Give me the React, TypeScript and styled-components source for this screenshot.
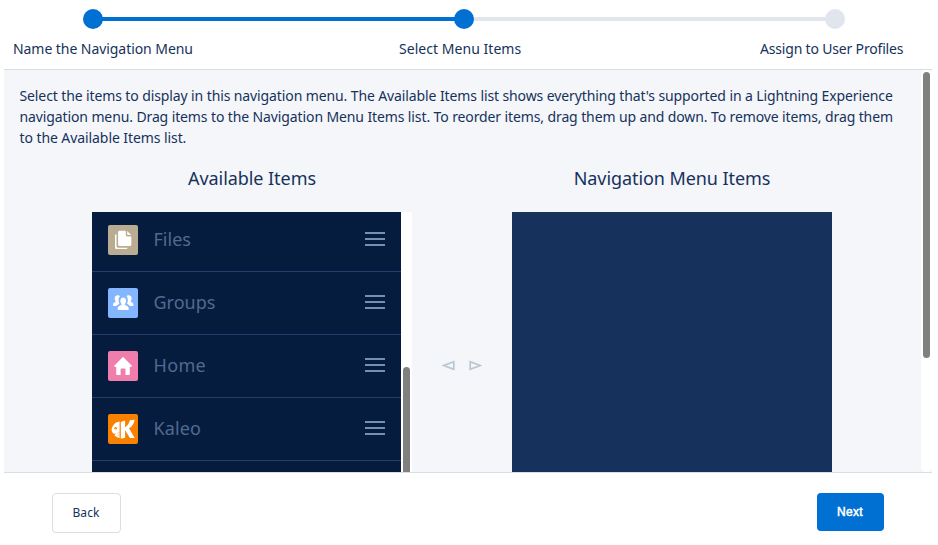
import React from "react";
import styled, { createGlobalStyle } from "styled-components";

const colors = {
  brand: "#0070d2",
  track: "#e0e5ee",
  text: "#16325c",
  border: "#d8dde6",
  panel: "#f4f6f9",
  list: "#061c3f",
  drop: "#16325c",
};

const GlobalStyle = createGlobalStyle`
  *, *::before, *::after { box-sizing: border-box; }
  html, body { margin: 0; background: #fff; overflow: hidden; }
  body { font-family: "Noto Sans", "Open Sans", sans-serif; font-size: 14px; color: ${colors.text}; }
`;

const Page = styled.div`
  display: flex;
  flex-direction: column;
  width: 938px;
  height: 545px;
  padding: 0 6px 0 4px;
`;

const Header = styled.header`
  flex: none;
  height: 70px;
  padding-top: 9px;
  border-bottom: 1px solid ${colors.border};
`;

const Progress = styled.div`
  display: flex;
  align-items: center;
  width: 762px;
  margin-left: 79px;
`;

const Dot = styled.span<{ $done?: boolean }>`
  flex: none;
  z-index: 1;
  width: 20px;
  height: 20px;
  border-radius: 50%;
  background: ${(p) => (p.$done ? colors.brand : colors.track)};
`;

const Bar = styled.span<{ $done?: boolean }>`
  flex: 1;
  height: 4px;
  margin: 0 -1px;
  background: ${(p) => (p.$done ? colors.brand : colors.track)};
`;

const StepLabels = styled.div`
  display: grid;
  grid-template-columns: 386px 361px 1fr;
  margin: 10px 0 0 9px;
  line-height: 20px;
`;

const Text = styled.span<{ $tracking?: number }>`
  white-space: nowrap;
  letter-spacing: ${(p) => p.$tracking ?? 0}px;
`;

const Panel = styled.main`
  flex: none;
  display: flex;
  height: 403px;
  border-bottom: 1px solid ${colors.border};
  overflow: hidden;
`;

const PanelContent = styled.div`
  width: 917px;
  padding: 15px 15px 0;
  background: ${colors.panel};
`;

const Scrollbar = styled.div`
  width: 11px;
  padding: 2px 2px 0;
  background: #fff;
`;

const PanelScrollbar = styled(Scrollbar)`
  box-shadow: 0 0 0 4px ${colors.panel};
  border-radius: 5px;
  clip-path: inset(0);
`;

const Thumb = styled.div<{ $height: number; $offset?: number }>`
  height: ${(p) => p.$height}px;
  margin-top: ${(p) => p.$offset ?? 0}px;
  border-radius: 4px;
  background: #808080;
`;

const Intro = styled.p`
  display: flex;
  flex-direction: column;
  margin: 0 0 0 0.5px;
  line-height: 21px;
`;

const Columns = styled.div`
  display: flex;
  margin: 18px 0 0 73px;
`;

const Column = styled.section`
  display: flex;
  flex-direction: column;
  width: 320px;
`;

const Heading = styled.h2`
  margin: 0 0 22px;
  font-size: 18px;
  font-weight: 400;
  line-height: 24px;
  text-align: center;
`;

const ListBox = styled.div`
  display: flex;
  height: 260px;
  overflow: hidden;
  background: ${colors.list};
`;

const Items = styled.ul`
  flex: 1;
  margin: -3px 0 0;
  padding: 0;
  list-style: none;
`;

const Item = styled.li`
  display: flex;
  align-items: center;
  height: 63px;
  padding: 0 16px;
  border-bottom: 1px solid #233f6b;
`;

const Tile = styled.span<{ $color: string }>`
  display: flex;
  flex: none;
  width: 30px;
  height: 30px;
  border-radius: 2px;
  background: ${(p) => p.$color};
`;

const ItemName = styled(Text)`
  flex: 1;
  margin-left: 15.5px;
  padding-bottom: 3px;
  font-size: 18px;
  line-height: 24px;
  color: #526a8e;
`;

const Grip = styled.span`
  width: 20px;
  height: 14px;
  margin-top: -3px;
  border: solid #7590b0;
  border-width: 2px 0;
  background: linear-gradient(#7590b0, #7590b0) center / 100% 2px no-repeat;
`;

const Transfer = styled.div`
  display: flex;
  justify-content: center;
  gap: 14px;
  width: 99px;
  margin-right: 1px;
  padding-top: 194px;
`;

const DropZone = styled.div`
  height: 260px;
  background: ${colors.drop};
`;

const Footer = styled.footer`
  display: flex;
  align-items: flex-start;
  justify-content: space-between;
  padding: 20px 48px 0;
`;

const Button = styled.button<{ $primary?: boolean }>`
  width: ${(p) => (p.$primary ? 67 : 69)}px;
  height: ${(p) => (p.$primary ? 38 : 40)}px;
  padding: 0 1px 0 0;
  border: ${(p) => (p.$primary ? "0" : `1px solid ${colors.border}`)};
  border-radius: 4px;
  background: ${(p) => (p.$primary ? colors.brand : "#fff")};
  color: ${(p) => (p.$primary ? "#fff" : colors.text)};
  font: 12px/18px ${(p) => (p.$primary ? '"Liberation Sans"' : '"Noto Sans"')}, sans-serif;
  letter-spacing: ${(p) => (p.$primary ? 0.35 : 0.1)}px;
  -webkit-text-stroke: ${(p) => (p.$primary ? "0.5px #fff" : "0")};
`;

const FilesIcon = () => (
  <svg width="30" height="30" viewBox="0 0 30 30" fill="#fff">
    <path d="M11.6 5.7h6.2v4.100c0 1 .6 1.600 1.600 1.600h3.900v8.200c0 .9-.6 1.500-1.500 1.500H11.600c-.9 0-1.500-.6-1.500-1.500V7.200c0-.9.6-1.500 1.500-1.500z" />
    <path d="M19.200 5.900l4 4h-3.300c-.4 0-.7-.3-.7-.7z" />
    <path d="M8.500 9.200v11.800c0 1 .7 1.700 1.700 1.700h9.300c0 .8-.7 1.400-1.600 1.400H8.700c-1 0-1.700-.7-1.700-1.700V10.600c0-.8.500-1.400 1.500-1.400z" />
  </svg>
);

const GroupsIcon = () => (
  <svg width="30" height="30" viewBox="0 0 30 30" fill="#fff">
    <path d="M15.200 9.400c1.800 0 2.900 1.400 2.900 3.400 0 1.200-.4 2.200-1 3-.4.600-.3 1.200.4 1.500 2 .8 3.200 1.600 3.200 3.100v.5c0 .8-.5 1.200-1.300 1.200h-8.400c-.8 0-1.300-.4-1.300-1.200v-.5c0-1.500 1.200-2.300 3.200-3.100.7-.3.8-.9.400-1.500-.6-.8-1-1.800-1-3 0-2 1.100-3.400 2.900-3.400z" />
    <path d="M9.800 7.200c1 0 1.800.3 2.300 1-1.200 1-1.600 2.500-1.500 4.400 0 1.200.3 2.200.8 3.100-1.300.6-2.200 1.300-2.900 2.300H6.200c-.8 0-1.200-.4-1.200-1v-.5c0-1.100.9-1.800 2.200-2.400.5-.3.600-.8.200-1.300-.5-.7-.7-1.500-.7-2.500 0-1.800 1.200-3.100 3.100-3.100z" />
    <path d="M20.600 7.200c-1 0-1.800.3-2.300 1 1.200 1 1.600 2.500 1.500 4.400 0 1.200-.3 2.200-.8 3.100 1.300.6 2.200 1.300 2.900 2.300h2.300c.8 0 1.200-.4 1.200-1v-.5c0-1.100-.9-1.800-2.200-2.400-.5-.3-.6-.8-.2-1.300.5-.7.7-1.500.7-2.500 0-1.800-1.200-3.100-3.100-3.100z" />
  </svg>
);

const HomeIcon = () => (
  <svg width="30" height="30" viewBox="0 0 30 30" fill="#fff">
    <path d="M14.400 6.400c.4-.4.900-.4 1.300 0l8.100 8.400c.4.400.2.900-.3.900H21.800v7.200c0 .7-.4 1.100-1.100 1.100h-3.200v-5.600c0-.6-.4-1-1-1h-2.900c-.6 0-1 .4-1 1V24H9.300c-.7 0-1.100-.4-1.100-1.100v-7.200H6.600c-.5 0-.7-.5-.3-.9z" />
  </svg>
);

const KaleoIcon = () => (
  <svg width="30" height="30" viewBox="0 0 30 30">
    <path
      d="M11.600 7.500v16.600c-2.200-.5-4-1.600-5.300-3.100l1.700-1.200-2.900-.3c-.7-1-1.100-1.900-1.500-3.200C3.700 12.400 6.600 8.200 11.600 7.500z"
      fill="#fff"
    />
    <circle cx="7.700" cy="14.200" r="1.300" fill="#f88200" />
    <circle cx="7.700" cy="14.200" r="0.400" fill="#fff" />
    <path d="M11.600 18.200l-2.300 1.300M11.600 20.800l-2.300 1.300" stroke="#f88200" strokeWidth="0.500" />
    <path d="M12.800 8.100l4.300-1.700v6.800c2.300-1.200 3.800-3.600 4.900-6.900l4.700-.5c-.8 4.300-2.800 7-5.700 8.500 1.600 2.600 3.500 5.900 5.700 9.700h-4.800l-4.800-8v7.700c-1.500.6-2.900.8-4.300.7z" fill="#fff" />
  </svg>
);

const Triangle = ({ right }: { right?: boolean }) => (
  <svg width="13" height="11" viewBox="0 0 13 11" fill="none" stroke="#b9c7d2" strokeWidth="1.700">
    <path d={right ? "M1.200 1.700v7.600l10-3.800z" : "M11.800 1.700v7.600l-10-3.800z"} />
  </svg>
);

const steps = [
  { label: "Name the Navigation Menu", tracking: -0.06 },
  { label: "Select Menu Items", tracking: 0.04 },
  { label: "Assign to User Profiles", tracking: -0.18 },
];

const introLines = [
  {
    text: "Select the items to display in this navigation menu. The Available Items list shows everything that's supported in a Lightning Experience",
    tracking: -0.11,
  },
  {
    text: "navigation menu. Drag items to the Navigation Menu Items list. To reorder items, drag them up and down. To remove items, drag them",
    tracking: -0.113,
  },
  { text: "to the Available Items list.", tracking: -0.08 },
];

const items = [
  { name: "Files", color: "#baac93", tracking: 0, Icon: FilesIcon },
  { name: "Groups", color: "#83b6ff", tracking: 0, Icon: GroupsIcon },
  { name: "Home", color: "#ef7ead", tracking: 0.35, Icon: HomeIcon },
  { name: "Kaleo", color: "#f88200", tracking: 0.1, Icon: KaleoIcon },
];

export default function App() {
  return (
    <>
      <GlobalStyle />
      <Page>
        <Header>
          <Progress>
            <Dot $done />
            <Bar $done />
            <Dot $done />
            <Bar />
            <Dot />
          </Progress>
          <StepLabels>
            {steps.map((s) => (
              <Text key={s.label} $tracking={s.tracking}>
                {s.label}
              </Text>
            ))}
          </StepLabels>
        </Header>
        <Panel>
          <PanelContent>
            <Intro>
              {introLines.map((l) => (
                <Text key={l.text} $tracking={l.tracking}>
                  {l.text}
                </Text>
              ))}
            </Intro>
            <Columns>
              <Column>
                <Heading>
                  <Text $tracking={-0.06}>Available Items</Text>
                </Heading>
                <ListBox>
                  <Items>
                    {items.map(({ name, color, tracking, Icon }) => (
                      <Item key={name}>
                        <Tile $color={color}>
                          <Icon />
                        </Tile>
                        <ItemName $tracking={tracking}>{name}</ItemName>
                        <Grip />
                      </Item>
                    ))}
                  </Items>
                  <Scrollbar>
                    <Thumb $offset={153} $height={120} />
                  </Scrollbar>
                </ListBox>
              </Column>
              <Transfer>
                <Triangle />
                <Triangle right />
              </Transfer>
              <Column>
                <Heading>
                  <Text $tracking={-0.08}>Navigation Menu Items</Text>
                </Heading>
                <DropZone />
              </Column>
            </Columns>
          </PanelContent>
          <PanelScrollbar>
            <Thumb $height={286} />
          </PanelScrollbar>
        </Panel>
        <Footer>
          <Button>Back</Button>
          <Button $primary>Next</Button>
        </Footer>
      </Page>
    </>
  );
}
